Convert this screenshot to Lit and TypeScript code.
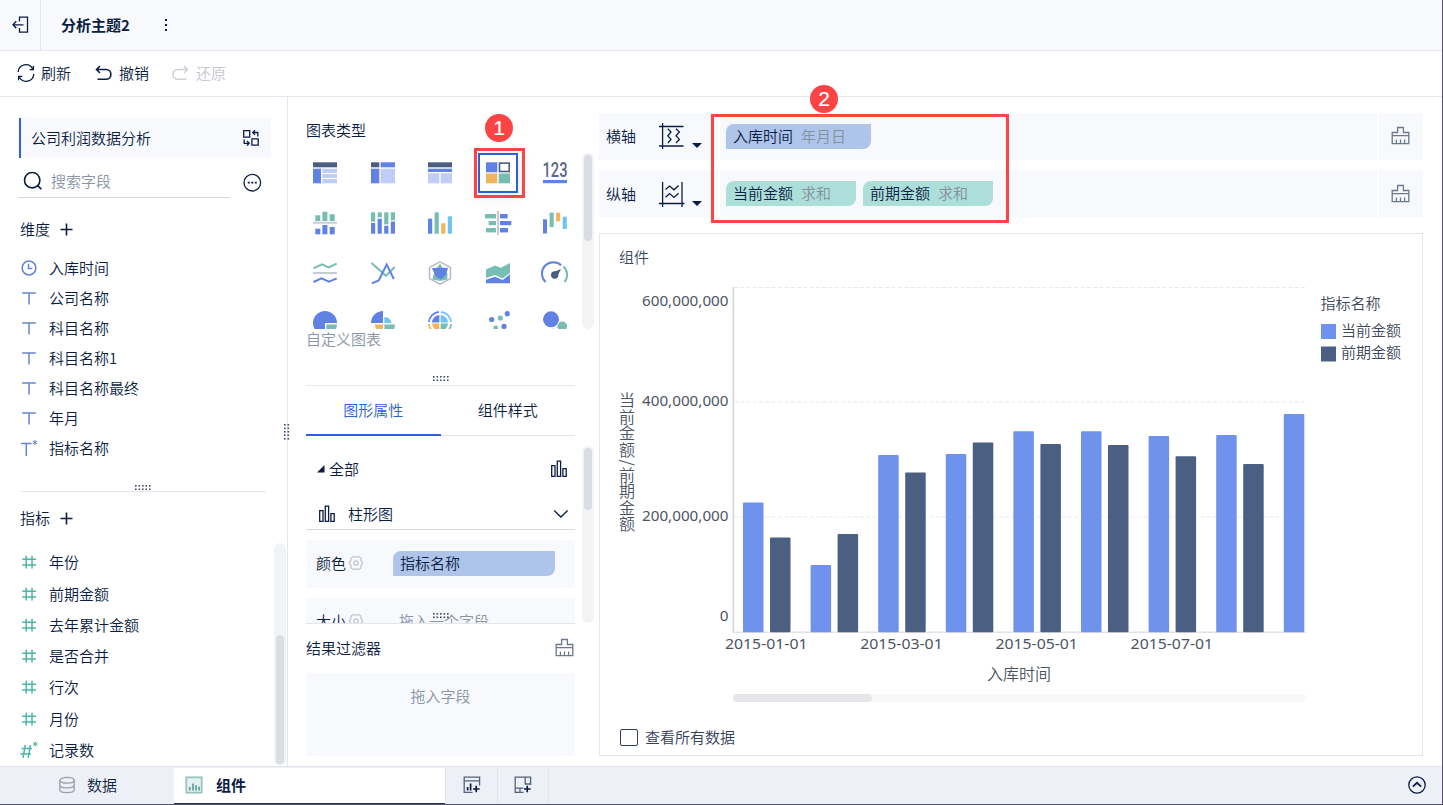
import { LitElement, html, svg, css } from 'lit';
import { customElement, property } from 'lit/decorators.js';

const C = {
  dark: '#4c5e80', blue: '#5f82e4', pale: '#c0cdf6', orange: '#f0b55c',
  teal: '#78bdb4', sky: '#70c4f0', gray: '#c8cbd3',
};

const r = (x: number, y: number, w: number, h: number, fill: string) =>
  svg`<rect x=${x} y=${y} width=${w} height=${h} fill=${fill}></rect>`;
const line = (points: string, stroke: string, w = 2) =>
  svg`<polyline points=${points} fill="none" stroke=${stroke} stroke-width=${w}></polyline>`;
const poly = (points: string, fill: string) => svg`<polygon points=${points} fill=${fill}></polygon>`;
const dot = (x: number, y: number, rad: number, fill: string) =>
  svg`<circle cx=${x} cy=${y} r=${rad} fill=${fill}></circle>`;
const path = (d: string, fill: string) => svg`<path d=${d} fill=${fill}></path>`;
const arc = (d: string, stroke: string, w = 2) =>
  svg`<path d=${d} fill="none" stroke=${stroke} stroke-width=${w}></path>`;

const chartTypes = [
  // grouped table, cross table, detail table, colour table, KPI card
  [r(0, 1.3, 24, 5, C.dark), r(0, 7.7, 8, 14.6, C.blue), r(9.3, 7.7, 14.7, 4.3, C.pale), r(9.3, 13, 14.7, 4, C.pale), r(9.3, 18, 14.7, 4.3, C.pale)],
  [r(0, 1.3, 8.3, 5, C.dark), r(9.6, 1.3, 14.4, 5, C.blue), r(0, 7.7, 8.3, 14.6, C.blue), r(9.6, 7.7, 14.4, 14.6, C.pale)],
  [r(0, 1.3, 24, 5, C.dark), r(0, 7.7, 24, 3.3, C.blue), r(0, 12.2, 11.3, 10.1, C.pale), r(12.7, 12.2, 11.3, 10.1, C.pale)],
  [r(0, 1.3, 11.3, 10, C.blue), svg`<rect x="13.5" y="2.1" width="9.7" height="8.4" fill="#fff" stroke=${C.dark} stroke-width="1.6"></rect>`, r(0, 12.5, 11.3, 9.8, C.orange), r(12.7, 12.5, 11.3, 9.8, C.teal)],
  [svg`<text class="kpi" x="-0.5" y="16" textLength="25" lengthAdjust="spacingAndGlyphs">123</text>`, r(0, 19, 24, 3.2, C.blue)],
  // column family
  [r(0, 10.7, 24, 2, C.gray), r(2.3, 4.3, 5, 5.7, C.teal), r(9.4, 0.7, 5, 9.3, C.teal), r(16.7, 3.2, 5, 6.8, C.teal), r(2.3, 17.7, 5, 5.6, C.blue), r(9.4, 14, 5, 9.3, C.blue), r(16.7, 16, 5, 7.3, C.blue)],
  [r(0, 1.3, 4.2, 9.4, C.teal), r(6.6, 1.3, 4.2, 5, C.teal), r(13.2, 1.3, 4.2, 12, C.teal), r(19.8, 1.3, 4.2, 8, C.teal), r(0, 12, 4.2, 10.7, C.blue), r(6.6, 7.8, 4.2, 14.9, C.blue), r(13.2, 14.7, 4.2, 8, C.blue), r(19.8, 10.6, 4.2, 12.1, C.blue)],
  [r(0, 7.7, 4.2, 15, C.blue), r(6.6, 1.3, 4.2, 21.4, C.teal), r(13.2, 12.3, 4.2, 10.4, C.orange), r(19.8, 5.3, 4.2, 17.4, C.sky)],
  [r(11, 0, 2, 24, C.gray), r(-1, 3, 11, 4.4, C.teal), r(2.7, 10, 7.3, 4.2, C.teal), r(0, 17, 10, 4.4, C.teal), r(14, 3, 7.6, 4.4, C.blue), r(14, 10, 11.3, 4.2, C.blue), r(14, 17, 8, 4.4, C.blue)],
  [r(0, 8.3, 4, 14.2, C.blue), r(6.6, 1.7, 4.1, 14.3, C.teal), r(13.1, 1.7, 4.1, 8.6, C.orange), r(19.7, 5.7, 4.1, 12.3, C.sky)],
  // line family
  [line('0.5,7.4 9,3.3 15.7,6.3 23.7,2.7', C.teal), r(0, 11, 24, 2, C.gray), line('0.5,21 8.5,17.4 16,20.6 23.7,17.4', C.blue)],
  [line('0.5,2 15,14.8 23.7,6', C.teal), line('0.7,22.4 7.7,19.5 15.7,3.5 22.8,18', C.blue)],
  [svg`<polygon points="12,0.8 22.5,6.4 22.5,17.6 12,23.2 1.5,17.6 1.5,6.4" fill="#fff" stroke="#b3b9c8" stroke-width="1.5"></polygon>`, poly('12,2.8 15,7.6 19.4,12 19.4,18.4 12,20 4.3,18.4 6.6,10', C.teal), poly('3.8,7 20,6.8 18,14 13,18.4 8,15.6', C.blue)],
  [poly('0,8.4 9,4.5 15,6.8 24,2 24,11.7 16.7,17.4 9,14.1 0,17', C.teal), poly('0,18.8 9,15.8 16.7,19 24,13.3 24,22.3 0,22.3', C.blue)],
  [arc('M2.6 21A11 11 0 0 1 18.2 4.2', C.blue), arc('M20.3 5.6A11 11 0 0 1 21.4 21.2', C.teal), dot(11.7, 14, 3.7, C.dark), poly('9.5,11.5 18,8 14,16', C.dark)],
  // proportion family
  [path('M12 12V24A12 12 0 1 1 24 12Z', C.blue), path('M13.4 13.4H24A11 11 0 0 1 13.4 24Z', C.teal)],
  [path('M12 12H0A12 12 0 0 1 12 0Z', C.blue), path('M13.4 12V6A7.5 7 0 0 1 20.5 12Z', C.sky), path('M12 13.4V21.5A8 8 0 0 1 4 13.4Z', C.orange), path('M13.4 13.4H24A10.6 10.6 0 0 1 13.4 24Z', C.teal)],
  [arc('M0.9 11A11.2 11.2 0 0 1 11 0.9', C.blue, 1.7), arc('M13 0.9A11.2 11.2 0 0 1 23.1 11', C.sky, 1.7), arc('M0.9 13A11.2 11.2 0 0 0 11 23.1', C.orange, 1.7), arc('M13 23.1A11.2 11.2 0 0 0 23.1 13', C.teal, 1.7),
    path('M11.4 11.4H4A8 8 0 0 1 11.4 4Z', C.blue), path('M12.6 11.4V4A8 8 0 0 1 20 11.4Z', C.sky), path('M11.4 12.6V20A8 8 0 0 1 4 12.6Z', C.orange), path('M12.6 12.6H20A8 8 0 0 1 12.6 20Z', C.teal)],
  [dot(5.7, 8.5, 2.6, C.blue), dot(14.3, 7, 2.6, C.teal), dot(21.3, 2.7, 2.6, C.blue), dot(9.7, 17, 2.4, C.teal), dot(18, 15.4, 2.6, C.blue)],
  [dot(8, 8.3, 8, C.blue), dot(19.3, 15.4, 4.8, C.teal), dot(10.7, 20.6, 3.2, C.orange)],
];

const icon = (w: number, h: number, body: unknown, cls = '') =>
  html`<svg class="ico ${cls}" width=${w} height=${h} viewBox="0 0 ${w} ${h}">${body}</svg>`;

const exitIcon = icon(18, 18, svg`<path d="M7.5 5.5V1.2H15.5V16.2H7.5V12M1 8.8H11.5M4.3 5.2L1 8.8L4.3 12.2"></path>`);
const refreshIcon = icon(18, 18, svg`<path d="M1.2 8A7.6 7.6 0 0 1 15.6 5M16.4 1.8V5.6H12.6M16.8 10A7.6 7.6 0 0 1 2.4 13M1.6 16.2V12.4H5.4"></path>`);
const undoIcon = icon(18, 16, svg`<path d="M5 1L1.5 4.5L5 8M1.5 4.5H11A4.9 4.9 0 0 1 11 14.3H2.5"></path>`, 'bold');
const redoIcon = icon(18, 16, svg`<path d="M12 1L15.5 4.5L12 8M15.5 4.5H6A4.9 4.9 0 0 0 6 14.3H14.5"></path>`, 'bold');
const swapIcon = icon(18, 18, svg`<path d="M1.7 1.7H7.7V8.2H1.7ZM9.9 9.8H16.2V16.2H9.9ZM11 3.5H15.8V7.5M13 1.2L10.8 3.5L13 5.7M2.2 10.5V14.3H7M5 12L7.2 14.3L5 16.6"></path>`);
const searchIcon = icon(20, 20, svg`<circle cx="9.2" cy="9.2" r="7.7"></circle><path d="M14.6 14.6L18.4 18.2"></path>`, 'bold');
const moreIcon = icon(20, 20, svg`<circle cx="10.3" cy="9.7" r="8.3"></circle><path d="M5.8 9.7h2M9.3 9.7h2M12.8 9.7h2" stroke-width="1.8"></path>`);
const plusIcon = icon(13, 13, svg`<path d="M6.5 0.5V12.5M0.5 6.5H12.5"></path>`, 'bold');
const clockIcon = icon(18, 18, svg`<circle cx="9" cy="9" r="6.9"></circle><path d="M8.5 4.8V9.5H12.3"></path>`, 'dim');
const textIcon = icon(18, 18, svg`<path d="M2.2 3.9H15.8M9 3.9V15.5"></path>`, 'dim');
const textStarIcon = icon(18, 18, svg`<path d="M1 4.5H11.5M6.3 4.5V17"></path><path d="M14.9 1V6M12.7 2.2L17.1 4.8M17.1 2.2L12.7 4.8" stroke-width="1"></path>`, 'dim');
const hashIcon = icon(18, 18, svg`<path d="M6.2 2.8V15.6M12 2.8V15.6M2.2 6.3H16M2.2 12H16"></path>`, 'num');
const hashStarIcon = icon(18, 18, svg`<path d="M5.3 3.8L3 16.8M10.5 3.8L8.2 16.8M1.5 7.5H12M0.5 13H11"></path><path d="M15.3 0.5V5.5M13.1 1.7L17.5 4.3M17.5 1.7L13.1 4.3" stroke-width="1"></path>`, 'num');
const barsIcon = icon(18, 18, svg`<path d="M1.7 5.7H5V16.4H1.7ZM7.3 1.2H10.6V16.4H7.3ZM12.9 8.7H16.2V16.4H12.9Z"></path>`);
const chevron = icon(16, 10, svg`<path d="M1.2 1.5L7.9 8L14.6 1.5"></path>`);
const gearIcon = icon(16, 16, svg`<path d="M5.6 1.5L8 2.3L10.4 1.5L12.8 3L13 5.4L14.8 8L13 10.6L12.8 13L10.4 14.5L8 13.7L5.6 14.5L3.2 13L3 10.6L1.2 8L3 5.4L3.2 3Z"></path><circle cx="8" cy="8" r="2.2"></circle>`, 'faint');
const brushIcon = icon(20, 20, svg`<path d="M1.2 17.6V6.5H6.6V1.5H12.4V6.5H17.8V17.6ZM1.2 9.7H17.8M5.4 17.5V13.4M9.5 17.5V13.4M13.6 17.5V13.4"></path>`, 'slate');
const axisX = icon(28, 28, svg`<path d="M1 4.5H25.5M1 24H25.5M4.6 1V27M9.8 6.8L13 10L9.8 13.8L13 17.4L9.8 21M18 6.8L21.4 10L18 13.8L21.4 17.4L18 21"></path>`);
const axisY = icon(28, 28, svg`<path d="M1 23.5H26.5M4.6 2V27M24 2V27M7.5 9.5L11.6 6L16 9.8L20.6 5.6M7.5 17.2L11.6 13.6L16 17.4L20.6 13.2"></path>`);
const dataIcon = icon(18, 18, svg`<ellipse cx="9" cy="4.3" rx="7.2" ry="2.9"></ellipse><path d="M1.8 4.3V13.8C1.8 17.6 16.2 17.6 16.2 13.8V4.3M1.8 9C1.8 12.8 16.2 12.8 16.2 9"></path>`, 'disk');
const widgetIcon = icon(18, 18, svg`<rect x="1.3" y="1.3" width="15.4" height="15.4" fill="#e3f1ef" stroke="#9cc4c0" stroke-width="1.8"></rect><path d="M4.8 14.5V11M8 14.5V7.5M11 14.5V9.2M14 14.5V10.8" stroke="#5f9d98" stroke-width="1.7"></path>`);
const addWidget = icon(18, 18, svg`<path d="M9.5 16.4H1.2V1.2H16.6V9.5M1.2 4.8H16.6" stroke="#55617a"></path><path d="M4.6 14.5V11M7.6 14.5V7.5M13.2 9.8V16.2M10 13H16.6" stroke-width="1.7"></path>`);
const addBoard = icon(18, 18, svg`<path d="M9.5 16.4H1.2V1.2H16.6V9M11.2 1.2V8H16.6M1.2 12.2H9.5M6 12.2V16.4" stroke="#55617a"></path><path d="M13.2 9.8V16.2M10 13H16.6" stroke-width="1.7"></path>`);
const collapseIcon = icon(20, 20, svg`<circle cx="10" cy="10" r="8.2"></circle><path d="M5.8 11.6L10 7.8L14.2 11.6" stroke-width="1.8"></path>`);

@customElement('drag-grip')
export class DragGrip extends LitElement {
  @property({ type: Number }) cols = 5;
  @property({ type: Number }) rows = 2;
  static styles = css`
    :host { display: block; line-height: 0; }
    .grip { display: block; fill: #3d4a68; }
  `;
  render() {
    const dots = [];
    for (let y = 0; y < this.rows; y++)
      for (let x = 0; x < this.cols; x++)
        dots.push(svg`<rect x=${x * 3.5} y=${y * 3.5} width="1.6" height="1.6"></rect>`);
    return html`<svg class="grip" width=${this.cols * 3.5 - 1.5} height=${this.rows * 3.5 - 1.5}>${dots}</svg>`;
  }
}

const blueTops = [502.5, 565, 455, 454, 431.3, 431.3, 436, 435, 414];
const darkTops = [537.5, 534, 472.5, 442.5, 444, 445, 456.3, 464];

@customElement('profit-chart')
export class ProfitChart extends LitElement {
  static styles = css`
    :host { display: block; }
    .plot { display: block; }
    .num { font: 15.3px "Noto Sans", "Open Sans", sans-serif; fill: #4c5464; }
    .label { font: 350 15px "Noto Sans CJK SC", sans-serif; fill: #3f485a; }
    .axis { font: 350 16px "Noto Sans CJK SC", sans-serif; fill: #4c5464; }
    .vertical { writing-mode: vertical-rl; }
  `;
  render() {
    const bar = (x: number, top: number, fill: string) =>
      svg`<rect x=${x} y=${top} width="20.5" height=${632.3 - top} rx="1" fill=${fill}></rect>`;
    return html`<svg class="plot" width="822" height="433" viewBox="600 277 822 433">
      ${[287.5, 402, 517].map((y) => svg`<line x1="734" x2="1306" y1=${y} y2=${y} stroke="#e9eaec" stroke-width="1.2" stroke-dasharray="4 2.3"></line>`)}
      <line x1="733.4" x2="733.4" y1="287" y2="633" stroke="#d6d7da" stroke-width="1.6"></line>
      <line x1="733" x2="1306" y1="632.2" y2="632.2" stroke="#e2e3e6" stroke-width="1.6"></line>
      ${blueTops.map((t, i) => bar(743 + i * 67.6, t, '#6f93ec'))}
      ${darkTops.map((t, i) => bar(770 + i * 67.6, t, '#4b5f83'))}
      ${[['600,000,000', 306.4], ['400,000,000', 406.4], ['200,000,000', 521.4]].map(([t, y]) => svg`<text class="num" x="642" y=${y} textLength="86.5" lengthAdjust="spacingAndGlyphs">${t}</text>`)}
      <text class="num" x="728.5" y="621.4" text-anchor="end">0</text>
      ${['2015-01-01', '2015-03-01', '2015-05-01', '2015-07-01'].map((t, i) => svg`<text class="num" x=${725 + i * 135.2} y="649.2" textLength="82.5" lengthAdjust="spacingAndGlyphs">${t}</text>`)}
      <text class="axis" x="987" y="679.5">入库时间</text>
      <text class="axis vertical" x="627" y="392.3" textLength="65.5">当前金额</text>
      <text class="axis" transform="translate(621.5 459.5) rotate(90)">/</text>
      <text class="axis vertical" x="627" y="467" textLength="65">前期金额</text>
      <rect x="733" y="694" width="573" height="8" rx="4" fill="#f8f8f9"></rect>
      <rect x="733" y="694" width="139" height="8" rx="4" fill="#e5e6ea"></rect>
      <text class="label" x="1320.5" y="309">指标名称</text>
      <rect x="1321" y="324" width="15" height="15" fill="#6f93ec"></rect>
      <rect x="1321" y="346.5" width="15" height="15" fill="#4b5f83"></rect>
      <text class="label" x="1341" y="336">当前金额</text>
      <text class="label" x="1341" y="358">前期金额</text>
    </svg>`;
  }
}

@customElement('app-root')
export class AppRoot extends LitElement {
  static styles = css`
    :host {
      display: flex; flex-direction: column; position: relative; box-sizing: border-box;
      width: 1443px; height: 805px; overflow: hidden; background: #fff; color: #0b1d43;
      border-right: 1px solid #55506e; border-bottom: 1px solid #55506e;
      font: 350 15px/20px "Noto Sans CJK SC", sans-serif;
    }
    * { box-sizing: border-box; }
    .ico { display: block; flex: none; fill: none; stroke: #0b1d43; stroke-width: 1.3; }
    .ico.pic { stroke: none; }
    .bold { stroke-width: 1.6; }
    .dim { stroke: #6684cf; stroke-width: 1.5; }
    .num { stroke: #4db5a6; stroke-width: 1.5; }
    .faint { stroke: #c3c7d1; }
    .slate { stroke: #6d788e; }
    .disk { stroke: #9a9eab; }
    .muted { color: #8b94a6; }

    .header { display: flex; height: 51px; background: #f7f9fd; border-bottom: 1px solid #e4e6ef; }
    .exit { display: flex; align-items: center; width: 41px; padding-left: 12px; border-right: 1px solid #e4e6ef; }
    .title { padding: 15px 0 0 20px; width: 124px; font-weight: 700; }
    .dots { display: flex; flex-direction: column; gap: 3px; padding-top: 19px; }
    .dots i { width: 2px; height: 2px; background: #0b1d43; }

    .toolbar { display: flex; height: 46px; padding: 0 0 2px 17px; border-bottom: 1px solid #e4e6ef; align-items: center; }
    .tool { display: flex; align-items: center; gap: 6px; margin-right: 24px; }
    .tool + .tool { margin-right: 23px; }
    .disabled { color: #c3c7d1; }
    .disabled .ico { stroke: #cdd0d9; }

    .main { display: flex; height: 669px; }
    .fields { width: 288px; border-right: 1px solid #e4e6ef; display: flex; flex-direction: column; }
    .source { display: flex; align-items: center; justify-content: space-between; margin: 21px 16px 0 19px; height: 40px; flex: none;
      padding: 0 11px 0 10px; border-left: 2px solid #2d61dc; background: #f7f9fd; }
    .search { display: flex; align-items: center; height: 40px; padding-left: 18px; flex: none; }
    .field { display: flex; align-items: center; gap: 8px; width: 212px; height: 40px; padding: 7px 0 0 5px; border-bottom: 1px solid #d5d8e0; }
    .more { padding: 9px 0 0 12px; }
    .head { display: flex; align-items: center; gap: 10px; height: 30px; padding-left: 20px; margin-top: 16px; flex: none; }
    .head.second { margin-top: 11px; }
    .dims { margin-top: 9px; }
    .item { display: flex; align-items: center; gap: 11px; height: 30px; padding-left: 20px; }
    .split { display: flex; align-items: flex-end; justify-content: center; height: 29px; margin: 0 21px 0 20px; padding-bottom: 1px; border-bottom: 1px solid #e4e6ec; flex: none; }
    .measures { display: flex; justify-content: space-between; margin-top: 10px; padding-right: 1px; height: 223px; }
    .list { padding-top: 3.8px; }
    .list .item { height: 31.25px; }
    .track { width: 12px; flex: none; padding: 2px; border-radius: 6px; background: #f2f3f5; }
    .thumb { width: 8px; border-radius: 4px; background: #dadde2; }
    .track.m { padding-top: 92px; }
    .track.m .thumb { height: 129px; }

    .grip-v { position: absolute; left: 284px; top: 424px; }

    .config { width: 311px; display: flex; flex-direction: column; }
    .label { height: 30px; line-height: 30px; margin: 18px 0 0 18px; flex: none; }
    .types { display: flex; margin-top: 3px; height: 181px; flex: none; }
    .grid { display: grid; grid-template-columns: 57px 58px 57px 58px 57px; grid-auto-rows: 50px; width: 285px; margin-left: 9px; height: 181px; overflow: hidden; flex: none; }
    .cell { display: flex; align-items: center; justify-content: center; }
    .cell svg { overflow: visible; }
    .cell:not(:nth-child(5n + 2)):not(:nth-child(5n + 4)) svg { margin-left: -1px; }
    .kpi { font: 500 19.5px "Roboto", sans-serif; fill: #5a6886; }
    .pick { display: flex; align-items: center; justify-content: center; width: 40px; height: 40px; border: 2px solid #2d61dc; box-shadow: 0 4px 16px rgba(60, 80, 130, .12); }
    .track.t { height: 176px; margin-top: 5px; }
    .track.t .thumb { height: 86px; }
    .custom { margin-left: 18px; }
    .split.c { height: 37px; width: 269px; margin: 0 0 0 18px; padding-bottom: 4px; }
    .tabs { display: flex; height: 50px; width: 269px; margin-left: 18px; flex: none; text-align: center; line-height: 48px; box-shadow: inset 0 -1px #e4e6ef; }
    .tabs span { flex: 1; }
    .tabs .on { color: #2d61dc; border-bottom: 2px solid #2d61dc; }
    .props { position: relative; display: flex; height: 188px; margin-left: 18px; flex: none; }
    .scroll { width: 269px; margin-right: 7px; height: 188px; overflow: hidden; border-bottom: 1px solid #e4e6ef; flex: none; }
    .all { display: flex; align-items: center; height: 64px; padding: 2px 7px 0 11px; }
    .tri { margin-right: 4px; }
    .all .ico { margin-left: auto; }
    .shape { display: flex; align-items: center; height: 30px; gap: 12px; padding: 0 6px 2px 12px; border-bottom: 1px solid #d5d8e0; }
    .shape .ico:last-child { margin-left: auto; }
    .prop { display: flex; align-items: center; height: 48px; margin-top: 10px; padding: 0 0 2px 10px; background: #f7f9fd; }
    .prop .name { display: flex; align-items: center; gap: 2px; width: 77px; }
    .prop .hint { padding-left: 6px; }
    .track.p { height: 177px; margin-top: 10px; }
    .track.p .thumb { height: 62px; }
    .grip-p { position: absolute; left: 127px; top: 177px; }
    .filter { display: flex; align-items: center; justify-content: space-between; height: 49px; width: 269px; margin-left: 18px; padding-bottom: 1px; flex: none; }
    .drop { height: 83px; width: 269px; margin-left: 18px; padding-top: 13px; text-align: center; background: #f7f9fd; }

    .pill { height: 25px; line-height: 24px; padding: 0 7px; border-radius: 8px 0 8px 0; background: #aec4e9; white-space: nowrap; }
    .pill.wide { width: 162px; }
    .pill.date { width: 145px; }
    .pill.value { width: 130px; background: #addfda; }
    .pill em { font-style: normal; color: #85909f; margin-left: 8px; }
    .pill + .pill { margin-left: 7px; }

    .board { width: 824px; padding-top: 16px; }
    .shelf { display: flex; gap: 2px; height: 47px; margin-bottom: 10px; }
    .shelf > div { display: flex; align-items: center; background: #f7f9fd; }
    .shelf > .axis { width: 119px; padding: 0 0 2px 7px; }
    .axis .ico { margin-left: 22px; }
    .caret { width: 0; height: 0; margin: 19px 0 0 6px; border: 5px solid transparent; border-bottom: 0; border-top-color: #0b1d43; }
    .slots { flex: 1; padding-left: 6px; }
    .shelf > .clear { width: 44px; padding: 0 0 2px 12px; }
    .card { height: 523px; margin-top: 16px; border: 1px solid #e4e6ec; color: #33405c; }
    .shelf.y { margin-bottom: 0; }
    .shelf.y > .axis, .shelf.y > .clear { padding-bottom: 0; }
    .name-row { height: 43px; padding: 13px 0 0 19px; color: #3c4a63; }
    .check { display: flex; align-items: center; gap: 7px; height: 53px; padding-left: 20px; }
    .box { width: 18px; height: 17px; margin-top: 1px; border: 1px solid #33405c; border-radius: 2px; }

    .footer { display: flex; height: 38px; background: #edf0f6; border-top: 1px solid #e1e4ea; }
    .tab { display: flex; align-items: center; gap: 11px; width: 174px; padding: 0 0 2px 58px; }
    .tab.on { width: 271px; gap: 13px; padding: 0 0 2px 11px; margin-top: 1px; background: #fff; font-weight: 700; border-bottom: 1px solid #26304f; }
    .add { display: flex; align-items: center; justify-content: center; width: 52px; padding-bottom: 1px; border-left: 1px solid #e1e4ea; }
    .add.last { border-right: 1px solid #e1e4ea; }
    .collapse { display: flex; align-items: center; margin-left: auto; padding: 0 15px 1px 0; }

    .mark { position: absolute; border: 3px solid #fc4444; pointer-events: none; }
    .mark.one { left: 474px; top: 148px; width: 51px; height: 50px; }
    .mark.two { left: 711px; top: 114px; width: 298px; height: 109px; }
    .badge { position: absolute; width: 28px; height: 28px; border-radius: 50%; background: #fc4444; color: #fff; text-align: center;
      font: 400 21px/28px "Liberation Sans", sans-serif; -webkit-text-stroke: .2px #fff; }
    .badge.one { left: 485px; top: 114px; }
    .badge.two { left: 810px; top: 85px; }
  `;

  render() {
    const item = (ic: unknown, text: string) => html`<div class="item">${ic}<span>${text}</span></div>`;
    const type = (body: unknown, i: number) => {
      const pic = icon(24, 24, body, 'pic');
      return html`<div class="cell">${i === 3 ? html`<div class="pick">${pic}</div>` : pic}</div>`;
    };
    return html`
      <div class="header">
        <div class="exit">${exitIcon}</div>
        <div class="title">分析主题2</div>
        <div class="dots"><i></i><i></i><i></i></div>
      </div>
      <div class="toolbar">
        <div class="tool">${refreshIcon}刷新</div>
        <div class="tool">${undoIcon}撤销</div>
        <div class="tool disabled">${redoIcon}还原</div>
      </div>
      <div class="main">
        <div class="fields">
          <div class="source"><span>公司利润数据分析</span>${swapIcon}</div>
          <div class="search">
            <div class="field">${searchIcon}<span class="muted">搜索字段</span></div>
            <div class="more">${moreIcon}</div>
          </div>
          <div class="head">维度${plusIcon}</div>
          <div class="dims">
            ${item(clockIcon, '入库时间')}
            ${['公司名称', '科目名称', '科目名称1', '科目名称最终', '年月'].map((t) => item(textIcon, t))}
            ${item(textStarIcon, '指标名称')}
          </div>
          <div class="split"><drag-grip></drag-grip></div>
          <div class="head second">指标${plusIcon}</div>
          <div class="measures">
            <div class="list">
              ${['年份', '前期金额', '去年累计金额', '是否合并', '行次', '月份'].map((t) => item(hashIcon, t))}
              ${item(hashStarIcon, '记录数')}
            </div>
            <div class="track m"><div class="thumb"></div></div>
          </div>
        </div>
        <div class="config">
          <div class="label">图表类型</div>
          <div class="types">
            <div class="grid">${chartTypes.map(type)}</div>
            <div class="track t"><div class="thumb"></div></div>
          </div>
          <div class="custom muted">自定义图表</div>
          <div class="split c"><drag-grip></drag-grip></div>
          <div class="tabs"><span class="on">图形属性</span><span>组件样式</span></div>
          <div class="props">
            <div class="scroll">
              <div class="all">
                <svg class="tri" width="8" height="8"><polygon points="0,7.5 7.5,7.5 7.5,0" fill="#0b1d43"></polygon></svg>
                <span>全部</span>${barsIcon}
              </div>
              <div class="shape">${barsIcon}<span>柱形图</span>${chevron}</div>
              <div class="prop"><div class="name">颜色${gearIcon}</div><div class="pill wide">指标名称</div></div>
              <div class="prop"><div class="name">大小${gearIcon}</div><div class="hint muted">拖入一个字段</div></div>
            </div>
            <div class="track p"><div class="thumb"></div></div>
            <drag-grip class="grip-p"></drag-grip>
          </div>
          <div class="filter"><span>结果过滤器</span>${brushIcon}</div>
          <div class="drop muted">拖入字段</div>
        </div>
        <div class="board">
          <div class="shelf">
            <div class="axis">横轴${axisX}<div class="caret"></div></div>
            <div class="slots"><div class="pill date">入库时间<em>年月日</em></div></div>
            <div class="clear">${brushIcon}</div>
          </div>
          <div class="shelf y">
            <div class="axis">纵轴${axisY}<div class="caret"></div></div>
            <div class="slots">
              <div class="pill value">当前金额<em>求和</em></div>
              <div class="pill value">前期金额<em>求和</em></div>
            </div>
            <div class="clear">${brushIcon}</div>
          </div>
          <div class="card">
            <div class="name-row">组件</div>
            <profit-chart></profit-chart>
            <div class="check"><div class="box"></div>查看所有数据</div>
          </div>
        </div>
      </div>
      <div class="footer">
        <div class="tab">${dataIcon}数据</div>
        <div class="tab on">${widgetIcon}组件</div>
        <div class="add">${addWidget}</div>
        <div class="add last">${addBoard}</div>
        <div class="collapse">${collapseIcon}</div>
      </div>
      <drag-grip class="grip-v" cols="2" rows="5"></drag-grip>
      <div class="mark one"></div>
      <div class="badge one">1</div>
      <div class="mark two"></div>
      <div class="badge two">2</div>
    `;
  }
}
